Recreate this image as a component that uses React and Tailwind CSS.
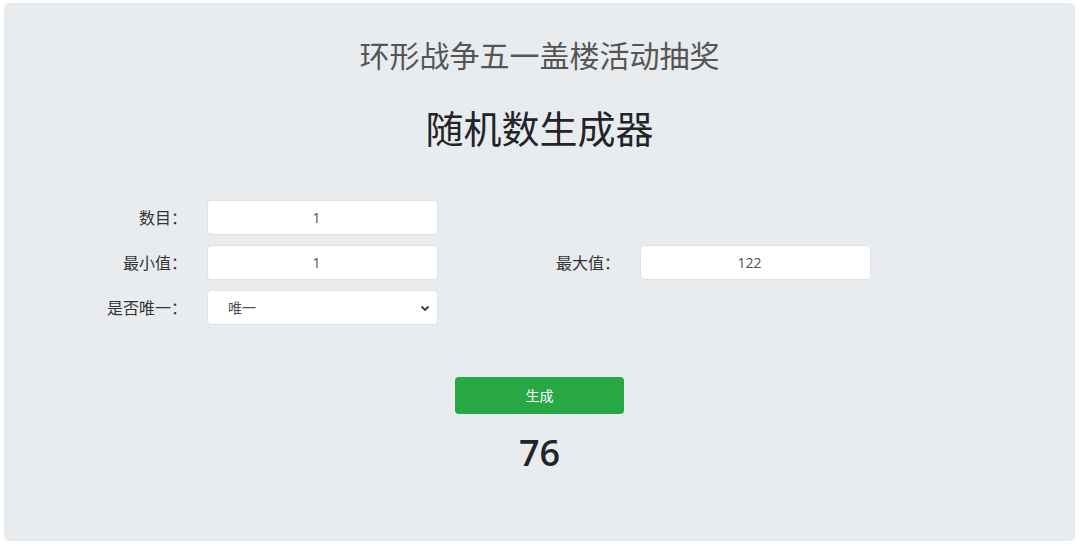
import React from "react";

const font = { fontFamily: '"Open Sans", "Noto Sans CJK SC", sans-serif' };

function Input({ value }) {
  return (
    <div className="flex h-[35px] w-[231px] items-center justify-center rounded-[4px] border border-[#dde1e5] bg-white pr-[12px] text-[14px] text-[#495057]">
      {value}
    </div>
  );
}

export default function App() {
  return (
    <div className="min-h-[546px] bg-white pl-[4px] pt-[3px]" style={font}>
      <div className="flex h-[538px] w-[1071px] flex-col items-center rounded-[5px] bg-[#e9ecef]">
        <h2 className="mt-[33px] text-[30px] leading-[40px] text-[#555555]">环形战争五一盖楼活动抽奖</h2>
        <h1 className="mt-[27px] text-[38px] leading-[50px] text-[#212529]">随机数生成器</h1>

        <div className="mt-[47px] flex w-full flex-col gap-[10px]">
          <div className="flex items-center">
            <div className="w-[203px] pr-[20px] text-right text-[16px] text-[#333333]">数目：</div>
            <Input value="1" />
          </div>
          <div className="flex items-center">
            <div className="w-[203px] pr-[20px] text-right text-[16px] text-[#333333]">最小值：</div>
            <Input value="1" />
            <div className="w-[202px] pr-[20px] text-right text-[16px] text-[#333333]">最大值：</div>
            <Input value="122" />
          </div>
          <div className="flex items-center">
            <div className="w-[203px] pr-[20px] text-right text-[16px] text-[#333333]">是否唯一：</div>
            <div className="flex h-[35px] w-[231px] items-center justify-between rounded-[4px] border border-[#dde1e5] bg-white pl-[20px] pr-[7px] text-[14px] text-[#495057]">
              <span>唯一</span>
              <svg width="10" height="10" viewBox="0 0 10 10">
                <path d="M1.5 3.5 L5 7 L8.5 3.5" fill="none" stroke="#343a40" strokeWidth="1.8" />
              </svg>
            </div>
          </div>
        </div>

        <button className="mt-[52px] flex h-[37px] w-[169px] items-center justify-center rounded-[4px] bg-[#28a745] text-[14px] text-white">
          生成
        </button>
        <div className="mt-[17px] text-[36px] font-semibold leading-[44px] text-[#212529]">76</div>
      </div>
    </div>
  );
}
